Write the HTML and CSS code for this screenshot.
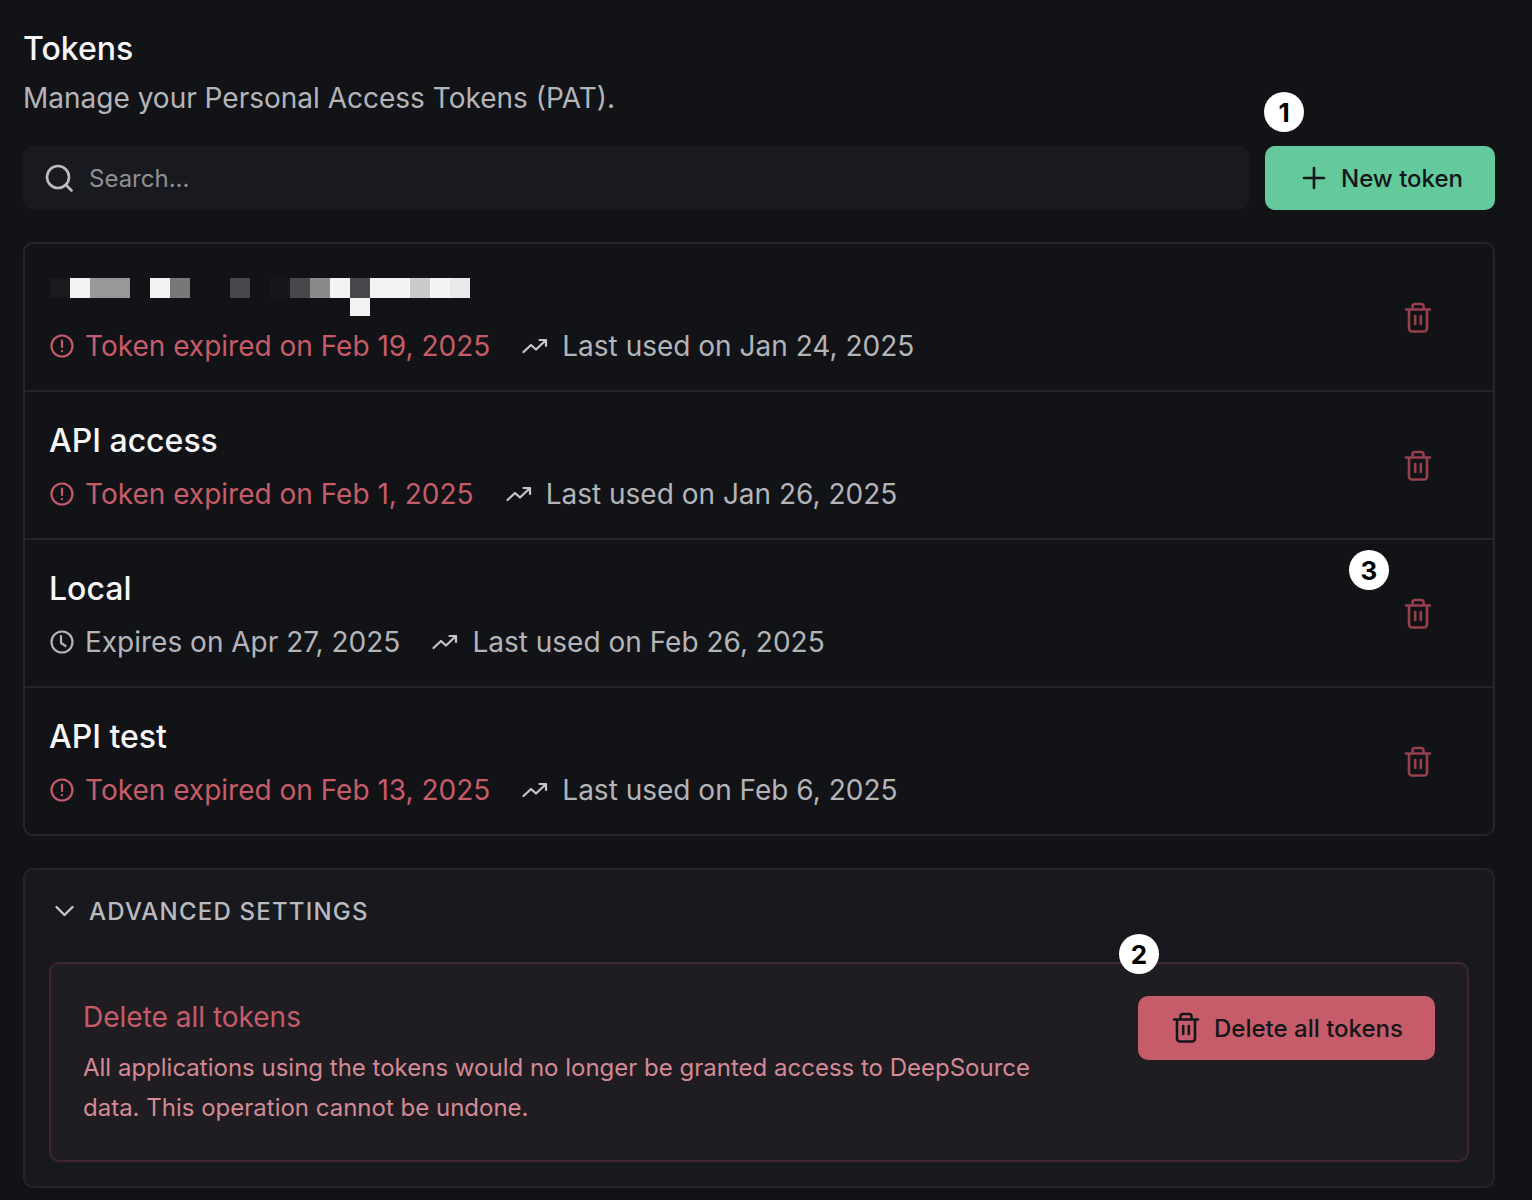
FILE: index.html
```html
<!DOCTYPE html>
<html lang="en">
<head>
<meta charset="utf-8">
<title>Tokens</title>
<link rel="stylesheet" href="styles.css">
</head>
<body>
<svg class="defs" width="0" height="0" aria-hidden="true">
  <symbol id="trash" viewBox="0 0 28 32" fill="none" stroke="currentColor" stroke-width="2.6" stroke-linecap="round" stroke-linejoin="round">
    <path d="M2 7.500h24M5 7.500V26.500a3 3 0 0 0 3 3h12a3 3 0 0 0 3-3V7.500M8.500 7.500V4.500a2.500 2.500 0 0 1 2.500-2.500h6a2.500 2.500 0 0 1 2.500 2.500v3M11.200 14v8M16.800 14v8"/>
  </symbol>
  <symbol id="trend" viewBox="0 0 26 16" fill="none" stroke="currentColor" stroke-width="2.200" stroke-linecap="round" stroke-linejoin="round">
    <path d="M1.500 14l7.500-7 5 4.500L24 2M17.500 2H24v6"/>
  </symbol>
  <symbol id="alert" viewBox="0 0 24 24" fill="none" stroke="currentColor" stroke-width="2.200" stroke-linecap="round">
    <circle cx="12" cy="12" r="10.500"/><path d="M12 6.500v6.500M12 17v.2"/>
  </symbol>
  <symbol id="clock" viewBox="0 0 24 24" fill="none" stroke="currentColor" stroke-width="2.200" stroke-linecap="round" stroke-linejoin="round">
    <circle cx="12" cy="12" r="10.500"/><path d="M11 6v7l4.500 3"/>
  </symbol>
</svg>
<main class="page">
  <h1 class="title">Tokens</h1>
  <p class="subtitle">Manage your Personal Access Tokens (PAT).</p>
  <div class="toolbar">
    <div class="search">
      <svg class="search-icon" viewBox="0 0 28 28" fill="none" stroke="currentColor" stroke-width="2.600" stroke-linecap="round"><circle cx="13" cy="13" r="11"/><path d="M21 21l5.500 5.500"/></svg>
      <span>Search...</span>
    </div>
    <button class="btn btn-green">
      <svg class="plus" viewBox="0 0 24 24" fill="none" stroke="currentColor" stroke-width="2.600" stroke-linecap="round"><path d="M12 2v20M2 12h20"/></svg>
      New token
    </button>
    <span class="badge badge-one">1</span>
  </div>
  <section class="list">
    <article class="row">
      <div class="info">
        <div class="pixels" aria-hidden="true">
          <i class="c-a"></i><i class="c-b"></i><i class="c-c"></i><i class="c-c"></i><i></i><i class="c-b"></i><i class="c-d"></i><i></i><i></i><i class="c-e"></i><i></i><i class="c-h"></i><i class="c-e"></i><i class="c-f"></i><i class="c-b"></i><i class="c-e"></i><i class="c-b"></i><i class="c-b"></i><i class="c-g"></i><i class="c-b"></i><i class="c-i"></i>
          <i class="c-b tail"></i>
        </div>
        <div class="meta">
          <span class="status bad"><svg class="ico"><use href="#alert"/></svg>Token expired on Feb 19, 2025</span>
          <span class="status"><svg class="ico-trend"><use href="#trend"/></svg>Last used on Jan 24, 2025</span>
        </div>
      </div>
      <svg class="row-trash"><use href="#trash"/></svg>
    </article>
    <article class="row">
      <div class="info">
        <h2 class="name">API access</h2>
        <div class="meta">
          <span class="status bad"><svg class="ico"><use href="#alert"/></svg>Token expired on Feb 1, 2025</span>
          <span class="status"><svg class="ico-trend"><use href="#trend"/></svg>Last used on Jan 26, 2025</span>
        </div>
      </div>
      <svg class="row-trash"><use href="#trash"/></svg>
    </article>
    <article class="row">
      <div class="info">
        <h2 class="name">Local</h2>
        <div class="meta">
          <span class="status"><svg class="ico"><use href="#clock"/></svg>Expires on Apr 27, 2025</span>
          <span class="status"><svg class="ico-trend"><use href="#trend"/></svg>Last used on Feb 26, 2025</span>
        </div>
      </div>
      <svg class="row-trash"><use href="#trash"/></svg>
      <span class="badge badge-three">3</span>
    </article>
    <article class="row">
      <div class="info">
        <h2 class="name">API test</h2>
        <div class="meta">
          <span class="status bad"><svg class="ico"><use href="#alert"/></svg>Token expired on Feb 13, 2025</span>
          <span class="status"><svg class="ico-trend"><use href="#trend"/></svg>Last used on Feb 6, 2025</span>
        </div>
      </div>
      <svg class="row-trash"><use href="#trash"/></svg>
    </article>
  </section>
  <section class="advanced">
    <div class="adv-head">
      <svg class="chevron" viewBox="0 0 20 12" fill="none" stroke="currentColor" stroke-width="2.400" stroke-linecap="round" stroke-linejoin="round"><path d="M2 2l8 8 8-8"/></svg>
      <span>ADVANCED SETTINGS</span>
    </div>
    <div class="danger">
      <div class="danger-text">
        <h3>Delete all tokens</h3>
        <p>All applications using the tokens would no longer be granted access to DeepSource data. This operation cannot be undone.</p>
      </div>
      <button class="btn btn-red">
        <svg class="btn-trash"><use href="#trash"/></svg>
        Delete all tokens
      </button>
      <span class="badge badge-two">2</span>
    </div>
  </section>
</main>
</body>
</html>
```
FILE: styles.css
```css
* { box-sizing: border-box; }
html, body { margin: 0; padding: 0; }
body {
  background: #121317;
  color: #fff;
  font-family: Inter, "Liberation Sans", sans-serif;
  height: 1200px;
  overflow: hidden;
}
.defs { position: absolute; }
.page { padding: 30px 37px 0 23px; }
.title { margin: 0; font-size: 32px; line-height: 38px; font-weight: 500; color: #f6f6f6; }
.subtitle { margin: 10px 0 0; font-size: 28px; line-height: 40px; font-weight: 400; color: #b4b5b9; }
.toolbar { position: relative; display: flex; gap: 16px; margin-top: 28px; height: 64px; }
.search {
  flex: 1; display: flex; align-items: center; gap: 16px; padding-left: 22px;
  background: #181a1f; border-radius: 10px; color: #8f9096; font-size: 24px;
}
.search-icon { width: 28px; height: 28px; color: #bcbdc1; }
.btn {
  display: flex; align-items: center; justify-content: center; border: 0; border-radius: 10px;
  font-family: inherit; font-size: 24px; font-weight: 500; color: #15161a; height: 64px;
}
.btn-green { width: 230px; gap: 15px; padding: 0 0 0 5px; background: #64c99d; }
.plus { width: 24px; height: 24px; }
.badge {
  position: absolute; width: 40px; height: 40px; border-radius: 50%; background: #fff; color: #000;
  display: flex; align-items: center; justify-content: center; font-size: 26px; font-weight: 700;
}
.badge-one { top: -54px; right: 191px; }
.badge-two { left: 1068px; top: -30px; }
.badge-three { left: 1324px; top: 10px; }
.list { margin-top: 32px; border: 2px solid #24262c; border-radius: 10px; }
.row {
  position: relative; height: 148px; display: flex; align-items: center; justify-content: space-between;
  padding: 0 61px 0 24px; border-bottom: 2px solid #24262c;
}
.row:last-child { border-bottom: 0; height: 146px; }
.info { display: flex; flex-direction: column; padding-top: 4px; }
.name { margin: 0; height: 40px; font-size: 32px; line-height: 40px; font-weight: 500; color: #f6f6f6; }
.meta { display: flex; gap: 32px; margin-top: 13px; font-size: 28px; line-height: 40px; color: #b4b5b9; }
.status { display: flex; align-items: center; }
.bad { color: #c65c69; }
.ico { width: 24px; height: 24px; margin: 0 11px 0 1px; }
.ico-trend { width: 26px; height: 16px; margin-right: 14px; color: #c6c7cb; }
.row-trash { width: 28px; height: 32px; margin-top: 2px; color: #96404d; }
.pixels {
  display: grid; grid-template-columns: repeat(21, 20px); grid-template-rows: 20px 18px; align-content: start;
  height: 40px; margin-left: 1px; padding-top: 5px;
}
.c-a { background: #191b1f; }
.c-b { background: #f3f3f3; }
.c-c { background: #989898; }
.c-d { background: #77787a; }
.c-e { background: #47484c; }
.c-f { background: #8a8a8a; }
.c-g { background: #cbcbcb; }
.c-h { background: #15171a; }
.c-i { background: #e9e9e9; }
.tail { grid-row: 2; grid-column: 16; }
.advanced {
  margin-top: 32px; height: 320px; background: #17191e; border: 2px solid #24262c; border-radius: 10px;
  padding: 0 24px;
}
.adv-head {
  display: flex; align-items: center; height: 82px; gap: 14px;
  color: #b9babe; font-size: 24px; font-weight: 500; letter-spacing: 1.200px;
}
.chevron { width: 21px; height: 12px; color: #c6c7cb; margin-left: 5px; }
.danger {
  position: relative; height: 200px; margin-top: 10px; display: flex; justify-content: space-between;
  background: #1f1d22; border: 2px solid #40272f; border-radius: 10px; padding: 32px 32px 0;
}
.danger-text { width: 980px; padding-top: 1px; }
.danger-text h3 { margin: 0; font-size: 28px; line-height: 40px; font-weight: 400; color: #c65c69; }
.danger-text p { margin: 11px 0 0; font-size: 24px; line-height: 40px; color: #d38a94; }
.btn-red { width: 297px; gap: 14px; padding: 0 0 0 2px; background: #c65c69; font-weight: 500; }
.btn-trash { width: 28px; height: 32px; color: #15161a; }
```
